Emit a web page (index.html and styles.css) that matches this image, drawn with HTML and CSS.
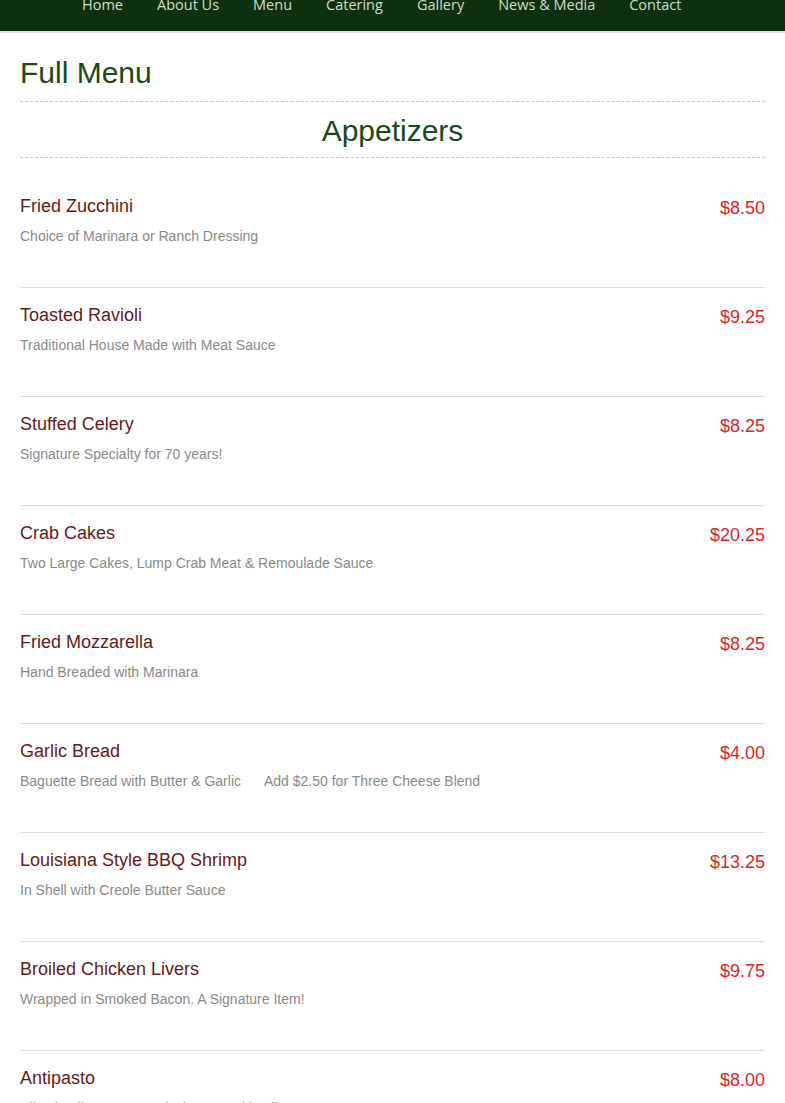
FILE: index.html
```html
<!DOCTYPE html>
<html lang="en">
<head>
<meta charset="utf-8">
<title>Full Menu</title>
<link rel="stylesheet" href="styles.css">
</head>
<body>
<nav class="topnav">
  <ul class="nav-list">
    <li><a href="#">Home</a></li>
    <li><a href="#">About Us</a></li>
    <li><a href="#">Menu</a></li>
    <li><a href="#">Catering</a></li>
    <li><a href="#">Gallery</a></li>
    <li><a href="#">News &amp; Media</a></li>
    <li><a href="#">Contact</a></li>
  </ul>
</nav>
<main class="content">
  <h1 class="page-title">Full Menu</h1>
  <h2 class="section-title">Appetizers</h2>
  <div class="menu-list">
    <div class="item">
      <div class="item-text">
        <div class="item-name">Fried Zucchini</div>
        <div class="item-desc">Choice of Marinara or Ranch Dressing</div>
      </div>
      <div class="item-price">$8.50</div>
    </div>
    <div class="item">
      <div class="item-text">
        <div class="item-name">Toasted Ravioli</div>
        <div class="item-desc">Traditional House Made with Meat Sauce</div>
      </div>
      <div class="item-price">$9.25</div>
    </div>
    <div class="item">
      <div class="item-text">
        <div class="item-name">Stuffed Celery</div>
        <div class="item-desc">Signature Specialty for 70 years!</div>
      </div>
      <div class="item-price">$8.25</div>
    </div>
    <div class="item">
      <div class="item-text">
        <div class="item-name">Crab Cakes</div>
        <div class="item-desc">Two Large Cakes, Lump Crab Meat &amp; Remoulade Sauce</div>
      </div>
      <div class="item-price">$20.25</div>
    </div>
    <div class="item">
      <div class="item-text">
        <div class="item-name">Fried Mozzarella</div>
        <div class="item-desc">Hand Breaded with Marinara</div>
      </div>
      <div class="item-price">$8.25</div>
    </div>
    <div class="item">
      <div class="item-text">
        <div class="item-name">Garlic Bread</div>
        <div class="item-desc">Baguette Bread with Butter &amp; Garlic<span class="item-extra">Add $2.50 for Three Cheese Blend</span></div>
      </div>
      <div class="item-price">$4.00</div>
    </div>
    <div class="item">
      <div class="item-text">
        <div class="item-name">Louisiana Style BBQ Shrimp</div>
        <div class="item-desc">In Shell with Creole Butter Sauce</div>
      </div>
      <div class="item-price">$13.25</div>
    </div>
    <div class="item">
      <div class="item-text">
        <div class="item-name">Broiled Chicken Livers</div>
        <div class="item-desc">Wrapped in Smoked Bacon. A Signature Item!</div>
      </div>
      <div class="item-price">$9.75</div>
    </div>
    <div class="item">
      <div class="item-text">
        <div class="item-name">Antipasto</div>
        <div class="item-desc">Sliced Italian Meats and Cheeses with Olives, Peppers &amp; Greens</div>
      </div>
      <div class="item-price">$8.00</div>
    </div>
  </div>
</main>
</body>
</html>
```

FILE: styles.css
```css
html, body {
  margin: 0;
  padding: 0;
  background: #ffffff;
}

body {
  font-family: "Liberation Sans", Arial, sans-serif;
  overflow: hidden;
}

.topnav {
  background: #0f300e;
  height: 31px;
  border-bottom: 2px solid #dde1dc;
  overflow: hidden;
}

.nav-list {
  list-style: none;
  margin: -5px 0 0 0;
  padding: 0 0 0 65px;
  display: flex;
}

.nav-list a {
  display: block;
  padding: 0 17px;
  font-family: "Open Sans", "Noto Sans", sans-serif;
  font-size: 14.5px;
  line-height: 20px;
  color: #cfdfc9;
  text-decoration: none;
}

.content {
  padding: 0 20px;
}

.page-title {
  margin: 24px 0 0 0;
  font-size: 30px;
  font-weight: normal;
  color: #1d4818;
  line-height: 32px;
  padding-bottom: 12px;
  border-bottom: 1px dashed #c8c8c8;
}

.section-title {
  margin: 0;
  padding: 13px 0 11px;
  text-align: center;
  font-size: 30px;
  font-weight: normal;
  color: #1d4818;
  line-height: 31px;
  border-bottom: 1px dashed #c8c8c8;
}

.menu-list {
  margin-top: 21px;
}

.item {
  display: flex;
  justify-content: space-between;
  align-items: flex-start;
  padding: 17px 0 43px;
  border-bottom: 1px solid #dddddd;
}

.item-name {
  font-size: 18px;
  line-height: 20px;
  color: #651a20;
}

.item-desc {
  margin-top: 12px;
  font-size: 14px;
  line-height: 16px;
  color: #8a8a8a;
}

.item-extra {
  margin-left: 23px;
}

.item-price {
  margin-top: 2px;
  font-size: 18px;
  line-height: 20px;
  color: #dc1f2b;
}
```
